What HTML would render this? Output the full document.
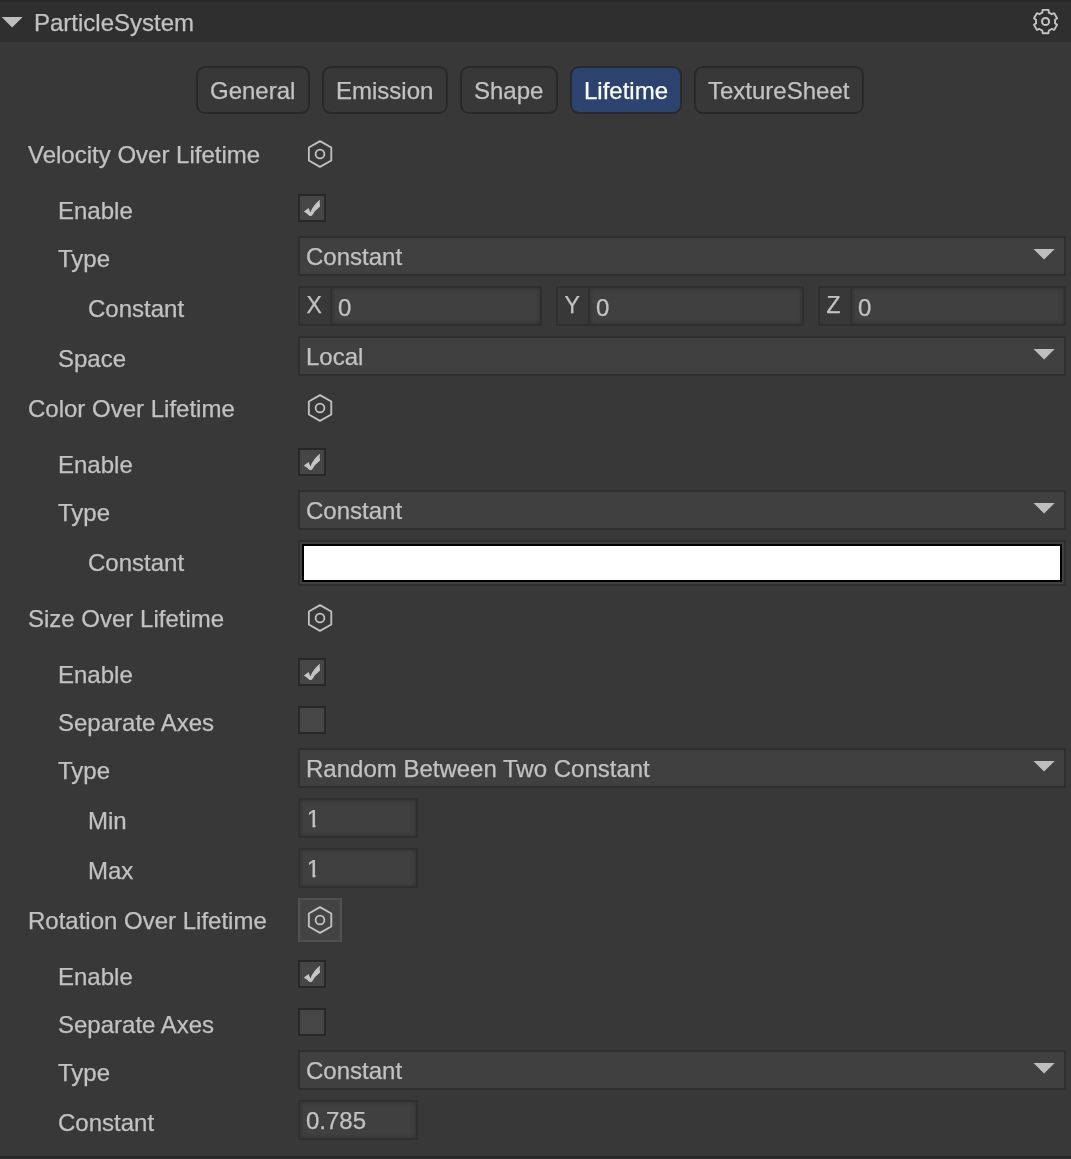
<!DOCTYPE html>
<html>
<head>
<meta charset="utf-8">
<title>ParticleSystem</title>
<style>
html,body{margin:0;padding:0;}
body{width:1071px;height:1159px;background:#383838;position:relative;overflow:hidden;
  font-family:"Liberation Sans",Arial,sans-serif;font-size:24px;color:#c2c2c2;line-height:28px;-webkit-text-stroke:0.25px #c2c2c2;}
.abs{position:absolute;}
#topline{left:0;top:0;width:1071px;height:2px;background:linear-gradient(#272727 0 1px,#2a2a2a 1px 2px);}
#header{left:0;top:2px;width:1071px;height:40px;background:#2f2f2f;}
#botline{left:0;top:1156px;width:1071px;height:3px;background:linear-gradient(#282828 0 2px,#2f2f2f 2px 3px);}
#tri{left:0;top:14px;}
#title{left:34px;top:9px;white-space:nowrap;}
.lbl{position:absolute;white-space:nowrap;height:28px;line-height:28px;}
#tabs{left:0;top:66px;}
.tab{position:absolute;top:0;box-sizing:border-box;height:48px;border:2px solid #292929;border-radius:9px;padding:1px 0 0 12px;line-height:44px;background:#383838;white-space:nowrap;}
.tab.on{background:#2c4370;color:#fff;border-color:#292a2c;-webkit-text-stroke-color:#fff;}
.sel{position:absolute;left:298px;width:768px;height:40px;box-sizing:border-box;border:2px solid #2f2f2f;background:#404040;}
.sel span{position:absolute;left:6px;top:5px;white-space:nowrap;}
.sel svg{position:absolute;left:732px;top:8px;}
.inp{position:absolute;height:40px;box-sizing:border-box;border:2px solid #303030;background:#404040;box-shadow:inset 0 0 4px rgba(0,0,0,.3);}
.inp span{position:absolute;left:6px;top:5px;white-space:nowrap;}
.inp span.one{left:6.8px;clip-path:polygon(0 0,100% 0,100% 20px,8.7px 20px,8.7px 100%,5.65px 100%,5.65px 20px,0 20px);}
.vec{position:absolute;height:40px;box-sizing:border-box;border:2px solid #2f2f2f;background:#383838;}
.vec b{position:absolute;left:6.6px;top:3px;font-size:23px;font-weight:normal;}
.vec .in{position:absolute;left:30px;top:0;right:0;bottom:0;border-left:2px solid #303030;background:#404040;box-shadow:inset 0 0 4px rgba(0,0,0,.3);}
.vec .in span{position:absolute;left:6px;top:6px;}
.cb{position:absolute;left:298px;width:28px;height:28px;box-sizing:border-box;border:2px solid #272727;background:#464646;}
.cb svg{position:absolute;left:-2px;top:-2px;}
.hex{position:absolute;left:306px;width:28px;height:32px;}
</style>
</head>
<body><div id="layer" style="position:absolute;left:0;top:0;width:1071px;height:1159px;will-change:transform">
<div id="topline" class="abs"></div>
<div id="header" class="abs"></div>
<svg id="tri" class="abs" width="26" height="16" viewBox="0 0 26 16"><polygon points="1.6,3 22.6,3 12.1,13.6" fill="#bebebe"/></svg>
<div id="title" class="abs">ParticleSystem</div>
<svg id="gear" class="abs" style="left:1030px;top:6px" width="30" height="30" viewBox="0 0 30 30"><path d="M12.28 6.58 L12.65 3.91 L18.45 3.91 L18.82 6.58 A9.55 9.55 0 0 1 21.69 8.23 L24.18 7.21 L27.09 12.24 L24.95 13.89 A9.55 9.55 0 0 1 24.95 17.21 L27.09 18.86 L24.18 23.89 L21.69 22.87 A9.55 9.55 0 0 1 18.82 24.52 L18.45 27.19 L12.65 27.19 L12.28 24.52 A9.55 9.55 0 0 1 9.41 22.87 L6.92 23.89 L4.01 18.86 L6.15 17.21 A9.55 9.55 0 0 1 6.15 13.89 L4.01 12.24 L6.92 7.21 L9.41 8.23 A9.55 9.55 0 0 1 12.28 6.58 Z" fill="none" stroke="#c4c4c4" stroke-width="1.9" stroke-linejoin="round"/><circle cx="15.55" cy="15.55" r="3.55" fill="none" stroke="#c4c4c4" stroke-width="2"/></svg>
<div id="tabs" class="abs"><div class="tab" style="left:196px;width:114px">General</div><div class="tab" style="left:322px;width:126px">Emission</div><div class="tab" style="left:460px;width:98px">Shape</div><div class="tab on" style="left:570px;width:112px">Lifetime</div><div class="tab" style="left:694px;width:170px">TextureSheet</div></div>
<div id="rows">
<div class="lbl" style="left:28px;top:141px">Velocity Over Lifetime</div>
<svg class="hex" style="top:138px" width="28" height="32" viewBox="0 0 28 32"><polygon points="14,3.1 25.3,9.55 25.3,22.45 14,28.9 2.85,22.45 2.85,9.55" fill="none" stroke="#c2c2c2" stroke-width="1.8" stroke-linejoin="round"/><circle cx="14" cy="16" r="4.4" fill="none" stroke="#c2c2c2" stroke-width="1.8"/></svg>
<div class="lbl" style="left:58px;top:197px">Enable</div>
<div class="cb" style="top:194px"><svg width="28" height="28" viewBox="0 0 28 28"><path d="M5.9 17.5 L10.6 14.1 L12.4 18.4 Q15.5 10.5 22 5.8 Q21.3 9 22.1 12.4 Q17 16 13.9 21.8 L11.5 22 Q9 19.5 5.9 17.5 Z" fill="#c6c6c6"/></svg></div>
<div class="lbl" style="left:58px;top:245px">Type</div>
<div class="sel" style="top:236px"><span>Constant</span><svg width="26" height="16" viewBox="0 0 26 16"><polygon points="1.5,3 22.7,3 12.1,13.4" fill="#bebebe"/></svg></div>
<div class="lbl" style="left:88px;top:295px">Constant</div>
<div class="vec" style="left:298px;top:286px;width:244px"><b>X</b><div class="in"><span>0</span></div></div>
<div class="vec" style="left:556px;top:286px;width:248px"><b>Y</b><div class="in"><span>0</span></div></div>
<div class="vec" style="left:818px;top:286px;width:248px"><b>Z</b><div class="in"><span>0</span></div></div>
<div class="lbl" style="left:58px;top:345px">Space</div>
<div class="sel" style="top:336px"><span>Local</span><svg width="26" height="16" viewBox="0 0 26 16"><polygon points="1.5,3 22.7,3 12.1,13.4" fill="#bebebe"/></svg></div>
<div class="lbl" style="left:28px;top:395px">Color Over Lifetime</div>
<svg class="hex" style="top:392px" width="28" height="32" viewBox="0 0 28 32"><polygon points="14,3.1 25.3,9.55 25.3,22.45 14,28.9 2.85,22.45 2.85,9.55" fill="none" stroke="#c2c2c2" stroke-width="1.8" stroke-linejoin="round"/><circle cx="14" cy="16" r="4.4" fill="none" stroke="#c2c2c2" stroke-width="1.8"/></svg>
<div class="lbl" style="left:58px;top:451px">Enable</div>
<div class="cb" style="top:448px"><svg width="28" height="28" viewBox="0 0 28 28"><path d="M5.9 17.5 L10.6 14.1 L12.4 18.4 Q15.5 10.5 22 5.8 Q21.3 9 22.1 12.4 Q17 16 13.9 21.8 L11.5 22 Q9 19.5 5.9 17.5 Z" fill="#c6c6c6"/></svg></div>
<div class="lbl" style="left:58px;top:499px">Type</div>
<div class="sel" style="top:490px"><span>Constant</span><svg width="26" height="16" viewBox="0 0 26 16"><polygon points="1.5,3 22.7,3 12.1,13.4" fill="#bebebe"/></svg></div>
<div class="lbl" style="left:88px;top:549px">Constant</div>
<div class="abs" style="left:298px;top:540px;width:768px;height:46px;box-sizing:border-box;border:2px solid #2f2f2f;background:#404040;padding:2px"><div style="box-sizing:border-box;width:100%;height:100%;border:2px solid #000;background:#fff"></div></div>
<div class="lbl" style="left:28px;top:605px">Size Over Lifetime</div>
<svg class="hex" style="top:602px" width="28" height="32" viewBox="0 0 28 32"><polygon points="14,3.1 25.3,9.55 25.3,22.45 14,28.9 2.85,22.45 2.85,9.55" fill="none" stroke="#c2c2c2" stroke-width="1.8" stroke-linejoin="round"/><circle cx="14" cy="16" r="4.4" fill="none" stroke="#c2c2c2" stroke-width="1.8"/></svg>
<div class="lbl" style="left:58px;top:661px">Enable</div>
<div class="cb" style="top:658px"><svg width="28" height="28" viewBox="0 0 28 28"><path d="M5.9 17.5 L10.6 14.1 L12.4 18.4 Q15.5 10.5 22 5.8 Q21.3 9 22.1 12.4 Q17 16 13.9 21.8 L11.5 22 Q9 19.5 5.9 17.5 Z" fill="#c6c6c6"/></svg></div>
<div class="lbl" style="left:58px;top:709px">Separate Axes</div>
<div class="cb" style="top:706px"></div>
<div class="lbl" style="left:58px;top:757px">Type</div>
<div class="sel" style="top:748px"><span>Random Between Two Constant</span><svg width="26" height="16" viewBox="0 0 26 16"><polygon points="1.5,3 22.7,3 12.1,13.4" fill="#bebebe"/></svg></div>
<div class="lbl" style="left:88px;top:807px">Min</div>
<div class="inp" style="left:298px;top:798px;width:120px"><span class="one">1</span></div>
<div class="lbl" style="left:88px;top:857px">Max</div>
<div class="inp" style="left:298px;top:848px;width:120px"><span class="one">1</span></div>
<div class="lbl" style="left:28px;top:907px">Rotation Over Lifetime</div>
<div class="abs" style="left:298px;top:898px;width:44px;height:44px;box-sizing:border-box;border:2px solid #515151;background:#444"></div>
<svg class="hex" style="top:904px" width="28" height="32" viewBox="0 0 28 32"><polygon points="14,3.1 25.3,9.55 25.3,22.45 14,28.9 2.85,22.45 2.85,9.55" fill="none" stroke="#c2c2c2" stroke-width="1.8" stroke-linejoin="round"/><circle cx="14" cy="16" r="4.4" fill="none" stroke="#c2c2c2" stroke-width="1.8"/></svg>
<div class="lbl" style="left:58px;top:963px">Enable</div>
<div class="cb" style="top:960px"><svg width="28" height="28" viewBox="0 0 28 28"><path d="M5.9 17.5 L10.6 14.1 L12.4 18.4 Q15.5 10.5 22 5.8 Q21.3 9 22.1 12.4 Q17 16 13.9 21.8 L11.5 22 Q9 19.5 5.9 17.5 Z" fill="#c6c6c6"/></svg></div>
<div class="lbl" style="left:58px;top:1011px">Separate Axes</div>
<div class="cb" style="top:1008px"></div>
<div class="lbl" style="left:58px;top:1059px">Type</div>
<div class="sel" style="top:1050px"><span>Constant</span><svg width="26" height="16" viewBox="0 0 26 16"><polygon points="1.5,3 22.7,3 12.1,13.4" fill="#bebebe"/></svg></div>
<div class="lbl" style="left:58px;top:1109px">Constant</div>
<div class="inp" style="left:298px;top:1100px;width:120px"><span>0.785</span></div>
</div>
<div id="botline" class="abs"></div>
</div></body>
</html>
